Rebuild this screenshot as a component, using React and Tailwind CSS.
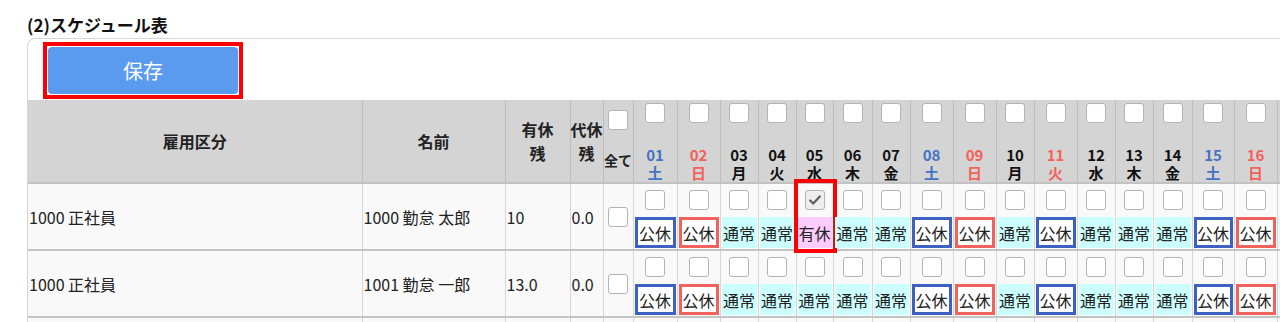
const days = [
  { d: "01", wd: "土", tone: "sat", box: "blue", col: "w-[44px]" },
  { d: "02", wd: "日", tone: "sun", box: "red", col: "w-[43px]" },
  { d: "03", wd: "月", col: "w-[38px]" },
  { d: "04", wd: "火", col: "w-[38px]" },
  { d: "05", wd: "水", col: "w-[37px]" },
  { d: "06", wd: "木", col: "w-[39px]" },
  { d: "07", wd: "金", col: "w-[38px]" },
  { d: "08", wd: "土", tone: "sat", box: "blue", col: "w-[43px]" },
  { d: "09", wd: "日", tone: "sun", box: "red", col: "w-[43px]" },
  { d: "10", wd: "月", col: "w-[38px]" },
  { d: "11", wd: "火", tone: "sun", box: "blue", col: "w-[43px]" },
  { d: "12", wd: "水", col: "w-[38px]" },
  { d: "13", wd: "木", col: "w-[38px]" },
  { d: "14", wd: "金", col: "w-[39px]" },
  { d: "15", wd: "土", tone: "sat", box: "blue", col: "w-[42px]" },
  { d: "16", wd: "日", tone: "sun", box: "red", col: "w-[43px]" },
  { d: "17", wd: "月", col: "w-[38px]" },
];

const rows = [
  { kubun: "1000 正社員", name: "1000 勤怠 太郎", yukyu: "10", daikyu: "0.0", taken: "05" },
  { kubun: "1000 正社員", name: "1001 勤怠 一郎", yukyu: "13.0", daikyu: "0.0" },
  { kubun: "1000 正社員", name: "1002 勤怠 花子", yukyu: "10.0", daikyu: "0.0" },
];

function Check({ checked, className = "" }) {
  return (
    <span
      className={
        "flex h-5 w-5 shrink-0 items-center justify-center rounded-[3px] border border-[#b4b4b4] " +
        (checked ? "bg-[#eeeeee] " : "bg-white ") +
        className
      }
    >
      {checked && (
        <svg viewBox="0 0 16 16" className="h-[14px] w-[14px]">
          <path d="M2.5 8.5l3.5 3.5 7.5-8" fill="none" stroke="#5f5f5f" strokeWidth="2.6" strokeLinecap="round" strokeLinejoin="round" />
        </svg>
      )}
    </span>
  );
}

function Label({ day, taken }) {
  if (taken) {
    return (
      <div className="mt-[7px] flex h-[31px] w-full items-center justify-center bg-[#ffccff]">有休</div>
    );
  }
  if (day.box === "blue") {
    return (
      <div className="mt-[7px] flex h-[31px] w-full items-center justify-center border-[3px] border-[#3c61c3] bg-white">公休</div>
    );
  }
  if (day.box === "red") {
    return (
      <div className="mt-[7px] flex h-[31px] w-full items-center justify-center border-[3px] border-[#f2625c] bg-white">公休</div>
    );
  }
  return (
    <div className="mt-[7px] flex h-[31px] w-full items-center justify-center bg-[#ccffff]">通常</div>
  );
}

function toneClass(tone) {
  if (tone === "sat") return "text-[#4472c4]";
  if (tone === "sun") return "text-[#f4605a]";
  return "text-[#111111]";
}

export default function App() {
  return (
    <div className="h-[322px] w-[1280px] overflow-hidden bg-white font-['Noto_Sans_CJK_JP','Noto_Sans',sans-serif] text-[#222]">
      <h2 className="pl-[27px] pt-[11px] text-[17px] font-bold leading-[27px] text-[#111]">(2)スケジュール表</h2>

      <div className="ml-[27px] w-max rounded-tl-[8px] border-l border-t border-[#d6d6d6] bg-white pt-[3px]">
        {/* Save */}
        <div className="ml-[15px] inline-block border-4 border-[#ff0000] p-[1px]">
          <button className="flex h-[47px] w-[190px] items-center justify-center rounded-[4px] bg-[#5b9bef] text-[20px] text-white">
            保存
          </button>
        </div>

        <table className="mt-[1px] w-[1287px] table-fixed border-collapse text-[16px]">
          <colgroup>
            <col className="w-[334px]" />
            <col className="w-[143px]" />
            <col className="w-[65px]" />
            <col className="w-[33px]" />
            <col className="w-[30px]" />
            {days.map((day) => (
              <col key={day.d} className={day.col} />
            ))}
          </colgroup>
          <thead>
            <tr className="h-[80px] border-b-2 border-[#c2c2c2] bg-[#d4d4d4] font-bold">
              <th className="border-r border-[#bdbdbd]">雇用区分</th>
              <th className="border-r border-[#bdbdbd]">名前</th>
              <th className="border-r border-[#bdbdbd] leading-6">有休<br />残</th>
              <th className="border-r border-[#bdbdbd] leading-6">代休<br />残</th>
              <th className="border-r border-[#bdbdbd] p-0">
                <div className="flex flex-col items-center">
                  <Check />
                  <span className="mt-[18px] whitespace-nowrap text-[14px] leading-6">全て</span>
                </div>
              </th>
              {days.map((day) => (
                <th key={day.d} className="border-r border-[#bdbdbd] p-0 align-top">
                  <div className={"flex flex-col items-center pt-[3px] text-[15px] leading-[18px] " + toneClass(day.tone)}>
                    <Check />
                    <span className="mt-[23px]">{day.d}</span>
                    <span>{day.wd}</span>
                  </div>
                </th>
              ))}
            </tr>
          </thead>
          <tbody>
            {rows.map((row, i) => (
              <tr key={i} className="h-[67px] border-b-2 border-[#c4c4c4] bg-[#f9f9f9]">
                <td className="border-r border-[#d6d6d6] pl-[1px]">{row.kubun}</td>
                <td className="border-r border-[#d6d6d6] pl-[1px] whitespace-nowrap">{row.name}</td>
                <td className="border-r border-[#d6d6d6] pl-[1px]">{row.yukyu}</td>
                <td className="border-r border-[#d6d6d6] pl-[1px]">{row.daikyu}</td>
                <td className="border-r border-[#d6d6d6] p-0">
                  <div className="flex justify-center">
                    <Check />
                  </div>
                </td>
                {days.map((day) => {
                  const taken = row.taken === day.d;
                  return (
                    <td key={day.d} className="relative border-r border-[#d6d6d6] px-[1px] pb-0 pt-[1px] align-top">
                      <div className="flex flex-col items-center">
                        <Check className="mt-[5px]" checked={taken} />
                        <Label day={day} taken={taken} />
                      </div>
                      {taken && (
                        <div className="pointer-events-none absolute -bottom-[4px] -left-[3px] -right-[4px] -top-[5px] border-4 border-[#ff0000]" />
                      )}
                    </td>
                  );
                })}
              </tr>
            ))}
          </tbody>
        </table>
      </div>
    </div>
  );
}
